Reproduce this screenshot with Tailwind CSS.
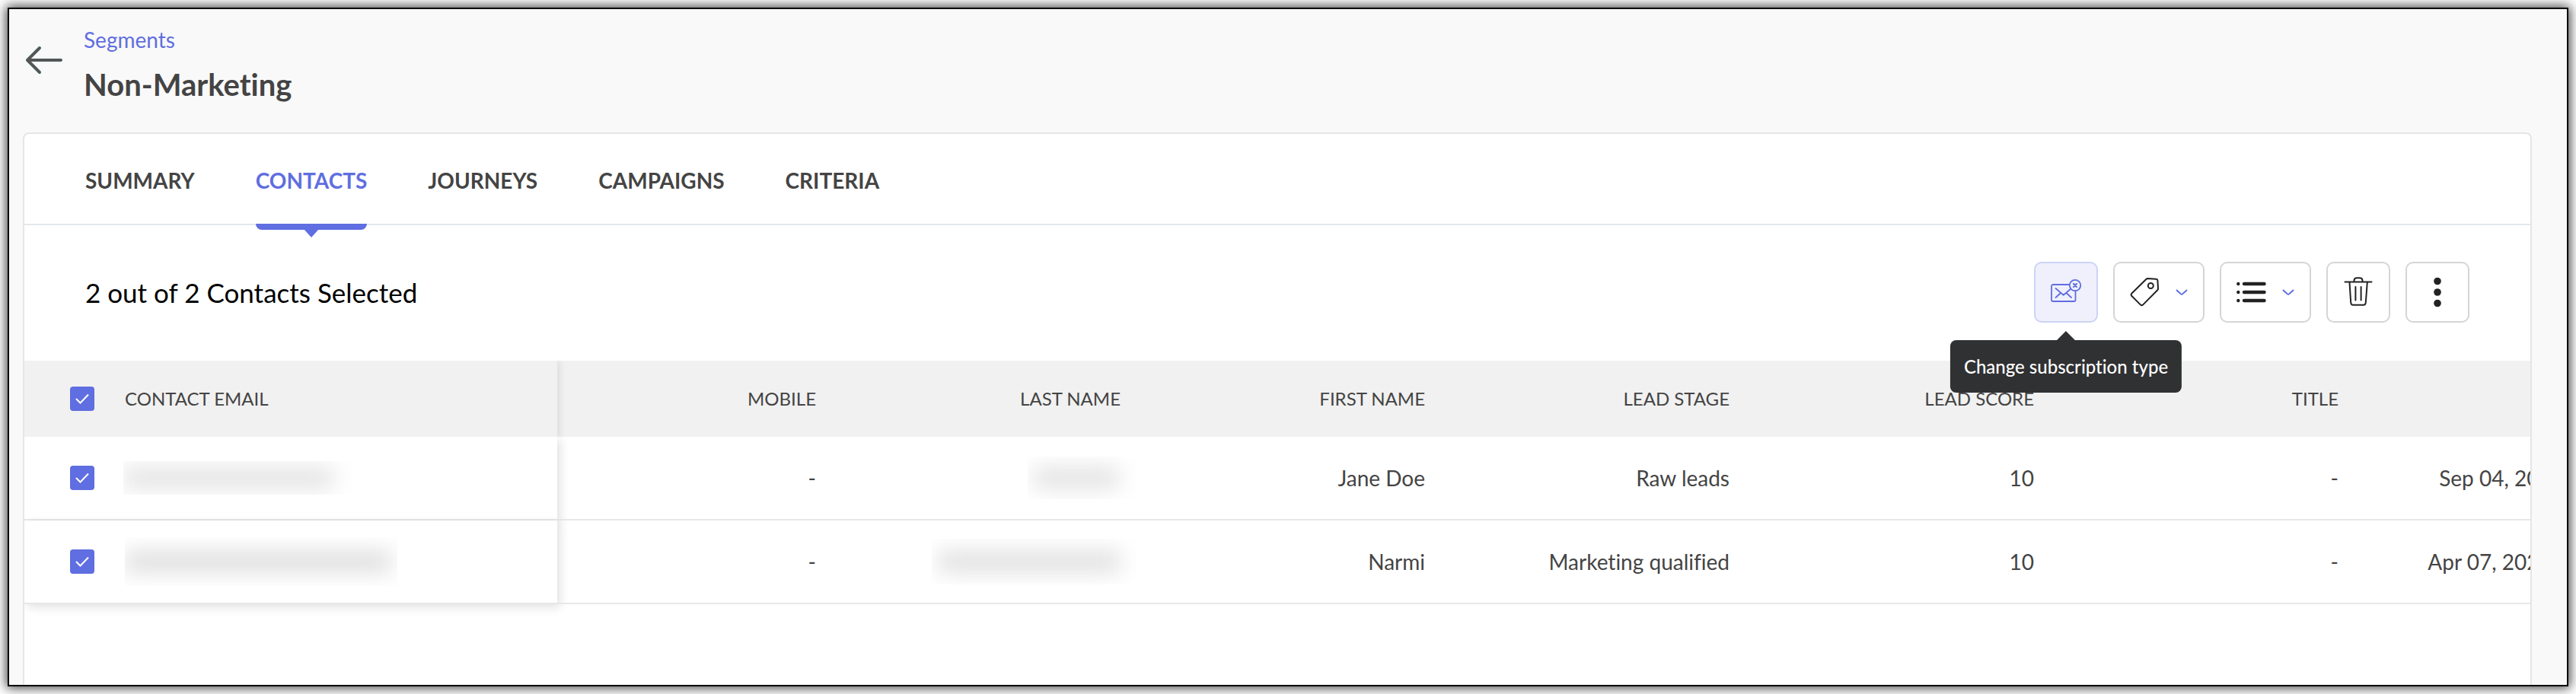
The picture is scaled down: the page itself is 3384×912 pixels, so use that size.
<!DOCTYPE html>
<html lang="en">
<head>
<meta charset="utf-8">
<title>Non-Marketing</title>
<meta name="viewport" content="width=device-width, initial-scale=1">
<script src="https://cdn.jsdelivr.net/npm/@tailwindcss/browser@4"></script>
</head>
<body class="bg-white font-[Lato,sans-serif] text-[#444] text-[28px] leading-9 [font-variant-ligatures:none]">
<div class="h-screen p-[10px]">
<div class="flex h-full flex-col overflow-hidden border-2 border-black bg-[#f9f9f9] shadow-[0_0_14px_2px_rgba(0,0,0,0.75)]">

  <header class="flex h-[162px] shrink-0 gap-[26px] pl-5">
    <button type="button" aria-label="Back" class="mt-[44px] h-14 w-[52px]">
      <svg class="h-14 w-[52px]" viewBox="0 0 52 56" fill="none" stroke-linecap="round" stroke-linejoin="round">
        <path d="M20 7 L4 23 L20 39 M4 23 H48" stroke="#f0ffff" stroke-width="8"/>
        <path d="M20 7 L4 23 L20 39 M4 23 H48" stroke="#555" stroke-width="4"/>
      </svg>
    </button>
    <div class="pt-[22px]">
      <a href="#" class="block text-[#5f6ee0]">Segments</a>
      <h1 class="mt-4 text-[40px] leading-[50px] font-bold">Non-Marketing</h1>
    </div>
  </header>

  <main class="mr-[46px] ml-[18px] flex-1 overflow-hidden rounded-t-lg border-2 border-b-0 border-[#e6e6e6] bg-white">
    <nav class="flex h-[120px] gap-20 border-b-2 border-[#e3e8ec] px-20 font-bold">
      <a href="#" class="flex items-center pt-1">SUMMARY</a>
      <a href="#" aria-current="page" class="relative flex items-center pt-1 text-[#5f6ee0]">CONTACTS
        <svg class="absolute top-full left-1/2 h-[18px] w-5 -translate-x-1/2" viewBox="0 0 20 18"><path d="M0 7H20L10 18Z" fill="#5f6ee0"/></svg>
        <span class="absolute top-full left-0 h-2 w-full rounded-b-lg bg-[#5f6ee0]"></span>
      </a>
      <a href="#" class="flex items-center pt-1">JOURNEYS</a>
      <a href="#" class="flex items-center pt-1">CAMPAIGNS</a>
      <a href="#" class="flex items-center pt-1">CRITERIA</a>
    </nav>

    <section class="flex h-[178px] items-center justify-between px-20 pb-[2px]">
      <h2 class="text-[35px] leading-11 text-black">2 out of 2 Contacts Selected</h2>
      <div class="flex gap-5">
        <div class="relative">
          <button type="button" aria-label="Change subscription type" aria-describedby="tip" class="flex h-20 w-[84px] items-center justify-center rounded-[10px] border-2 border-[#cdd3f6] bg-[#f0f0fd]">
            <svg class="h-10 w-10" viewBox="0 0 40 40" fill="none" stroke="#5f6ee0" stroke-width="1.8" stroke-linecap="round" stroke-linejoin="round">
              <path d="M24 10H3A2 2 0 0 0 1 12V30A2 2 0 0 0 3 32H30.500A2 2 0 0 0 32.500 30V18"/>
              <path d="M6.500 15L16.700 23.700L26.500 15.500M6.500 27L12.500 21.500M21 21.500L27 27"/>
              <circle cx="32" cy="11" r="7.200"/><path d="M30 9L34 13M34 9L30 13" stroke-width="2.200"/>
            </svg>
          </button>
          <div id="tip" role="tooltip" class="absolute top-full left-1/2 z-10 mt-[23px] -translate-x-1/2 rounded-lg bg-[#303133] px-[18px] py-[18px] text-2xl leading-[33px] whitespace-nowrap text-white font-medium">
            <svg class="absolute bottom-full left-1/2 h-3 w-6 -translate-x-1/2" viewBox="0 0 24 12"><path d="M0 12L12 0L24 12Z" fill="#303133"/></svg>
            Change subscription type
          </div>
        </div>
        <button type="button" aria-label="Tags" class="flex h-20 w-[120px] items-center gap-5 rounded-[10px] border-2 border-[#d5d5d5] pl-5">
          <svg class="h-10 w-10" viewBox="0 0 40 40" fill="none" stroke="#222" stroke-width="2" stroke-linejoin="round">
            <path d="M21.500 2.800Q22.300 2 23.500 2L34.500 2.700Q36.300 2.900 36.400 4.500L37 15Q37.100 16.300 36.200 17.200L17 36.600Q15.500 38 14 36.600L2.200 24.800Q1 23.300 2.200 21.800Z"/><circle cx="27.300" cy="11.500" r="3.500"/>
          </svg>
          <svg class="h-2 w-4" viewBox="0 0 16 8" fill="none" stroke="#5f6ee0" stroke-width="2"><path d="M1 1Q7.500 7 8 7Q8.500 7 15 1"/></svg>
        </button>
        <button type="button" aria-label="Lists" class="flex h-20 w-[120px] items-center gap-5 rounded-[10px] border-2 border-[#d5d5d5] pl-5">
          <svg class="h-10 w-10" viewBox="0 0 40 40" fill="#222">
            <circle cx="2.300" cy="9" r="2.200"/><circle cx="2.300" cy="20" r="2.200"/><circle cx="2.300" cy="31" r="2.200"/>
            <path d="M10 9H36.500M10 20H36.500M10 31H36.500" stroke="#222" stroke-width="4.400" stroke-linecap="round"/>
          </svg>
          <svg class="h-2 w-4" viewBox="0 0 16 8" fill="none" stroke="#5f6ee0" stroke-width="2"><path d="M1 1Q7.500 7 8 7Q8.500 7 15 1"/></svg>
        </button>
        <button type="button" aria-label="Delete" class="flex h-20 w-[84px] items-center justify-center rounded-[10px] border-2 border-[#d5d5d5]">
          <svg class="h-10 w-10" viewBox="0 0 40 40" fill="none" stroke="#222" stroke-width="2" stroke-linecap="round" stroke-linejoin="round">
            <path d="M2.500 6.600H37.500M14.500 6V4.500Q14.800 1.200 18 1.200H22Q25.200 1.200 25.500 4.500V6M8.500 7L10.200 33.500Q10.500 36.800 13 36.800H27Q29.500 36.800 29.800 33.500L31.800 7M16.400 13V30.500M23.600 13V30.500"/>
          </svg>
        </button>
        <button type="button" aria-label="More actions" class="flex h-20 w-[84px] items-center justify-center rounded-[10px] border-2 border-[#d5d5d5]">
          <svg class="h-10 w-10" viewBox="0 0 40 40" fill="#222"><circle cx="20" cy="5.500" r="4.800"/><circle cx="20" cy="20" r="4.800"/><circle cx="20" cy="34.500" r="4.800"/></svg>
        </button>
      </div>
    </section>

    <table class="w-[3510px] table-fixed border-separate border-spacing-0 text-right whitespace-nowrap">
      <thead>
        <tr class="h-[100px] text-2xl [&>th]:bg-[#f1f1f1] [&>th]:pr-15 [&>th]:font-normal">
          <th class="w-[700px] p-0 text-left shadow-[4px_0_8px_rgba(0,0,0,0.08)] [clip-path:inset(0_-16px_0_0)]">
            <span class="flex items-center gap-10 pl-15">
              <span class="relative flex size-8"><input type="checkbox" checked aria-label="Select all contacts" class="size-8 appearance-none rounded bg-[#5f6ee0]"><svg class="pointer-events-none absolute inset-0 size-8" viewBox="0 0 32 32" fill="none" stroke="#fff" stroke-width="2"><path d="M8 16L13.500 21.500L24 10.500"/></svg></span>
              CONTACT EMAIL
            </span>
          </th>
          <th>MOBILE</th><th>LAST NAME</th><th>FIRST NAME</th><th>LEAD STAGE</th><th>LEAD SCORE</th><th>TITLE</th><th class="w-[410px]"></th>
        </tr>
      </thead>
      <tbody>
        <tr class="h-[110px] [&>td]:border-b-2 [&>td]:border-[#e7e7e7] [&>td]:pr-15">
          <td class="bg-white text-left shadow-[4px_4px_12px_rgba(0,0,0,0.12)]">
            <span class="flex items-center gap-[38px] pl-15">
              <span class="relative flex size-8"><input type="checkbox" checked aria-label="Select Jane Doe" class="size-8 appearance-none rounded bg-[#5f6ee0]"><svg class="pointer-events-none absolute inset-0 size-8" viewBox="0 0 32 32" fill="none" stroke="#fff" stroke-width="2"><path d="M8 16L13.500 21.500L24 10.500"/></svg></span>
              <span class="flex h-11 w-[300px] items-center overflow-hidden"><span class="h-7 w-[276px] bg-[#e3e3e3] blur-[14px]"></span></span>
            </span>
          </td>
          <td>-</td>
          <td><span class="-mr-5 ml-auto flex h-14 w-[142px] items-center overflow-hidden pl-2"><span class="h-7 w-[112px] bg-[#e2e2e2] blur-[14px]"></span></span></td>
          <td>Jane Doe</td><td>Raw leads</td><td>10</td><td>-</td><td>Sep 04, 2023 9:12 AM</td>
        </tr>
        <tr class="h-[110px] [&>td]:border-b-2 [&>td]:border-[#e7e7e7] [&>td]:pr-15">
          <td class="bg-white text-left shadow-[4px_4px_12px_rgba(0,0,0,0.12)]">
            <span class="flex items-center gap-10 pl-15">
              <span class="relative flex size-8"><input type="checkbox" checked aria-label="Select Narmi" class="size-8 appearance-none rounded bg-[#5f6ee0]"><svg class="pointer-events-none absolute inset-0 size-8" viewBox="0 0 32 32" fill="none" stroke="#fff" stroke-width="2"><path d="M8 16L13.500 21.500L24 10.500"/></svg></span>
              <span class="flex h-16 w-[358px] items-center overflow-hidden"><span class="h-7 w-[350px] bg-[#dedede] blur-[14px]"></span></span>
            </span>
          </td>
          <td>-</td>
          <td><span class="-mr-5 ml-auto flex h-15 w-[268px] items-center overflow-hidden pl-2"><span class="h-7 w-[240px] bg-[#e0e0e0] blur-[14px]"></span></span></td>
          <td>Narmi</td><td>Marketing qualified</td><td>10</td><td>-</td><td>Apr 07, 2023 10:34 AM</td>
        </tr>
      </tbody>
    </table>
  </main>
</div>
</div>
</body>
</html>
